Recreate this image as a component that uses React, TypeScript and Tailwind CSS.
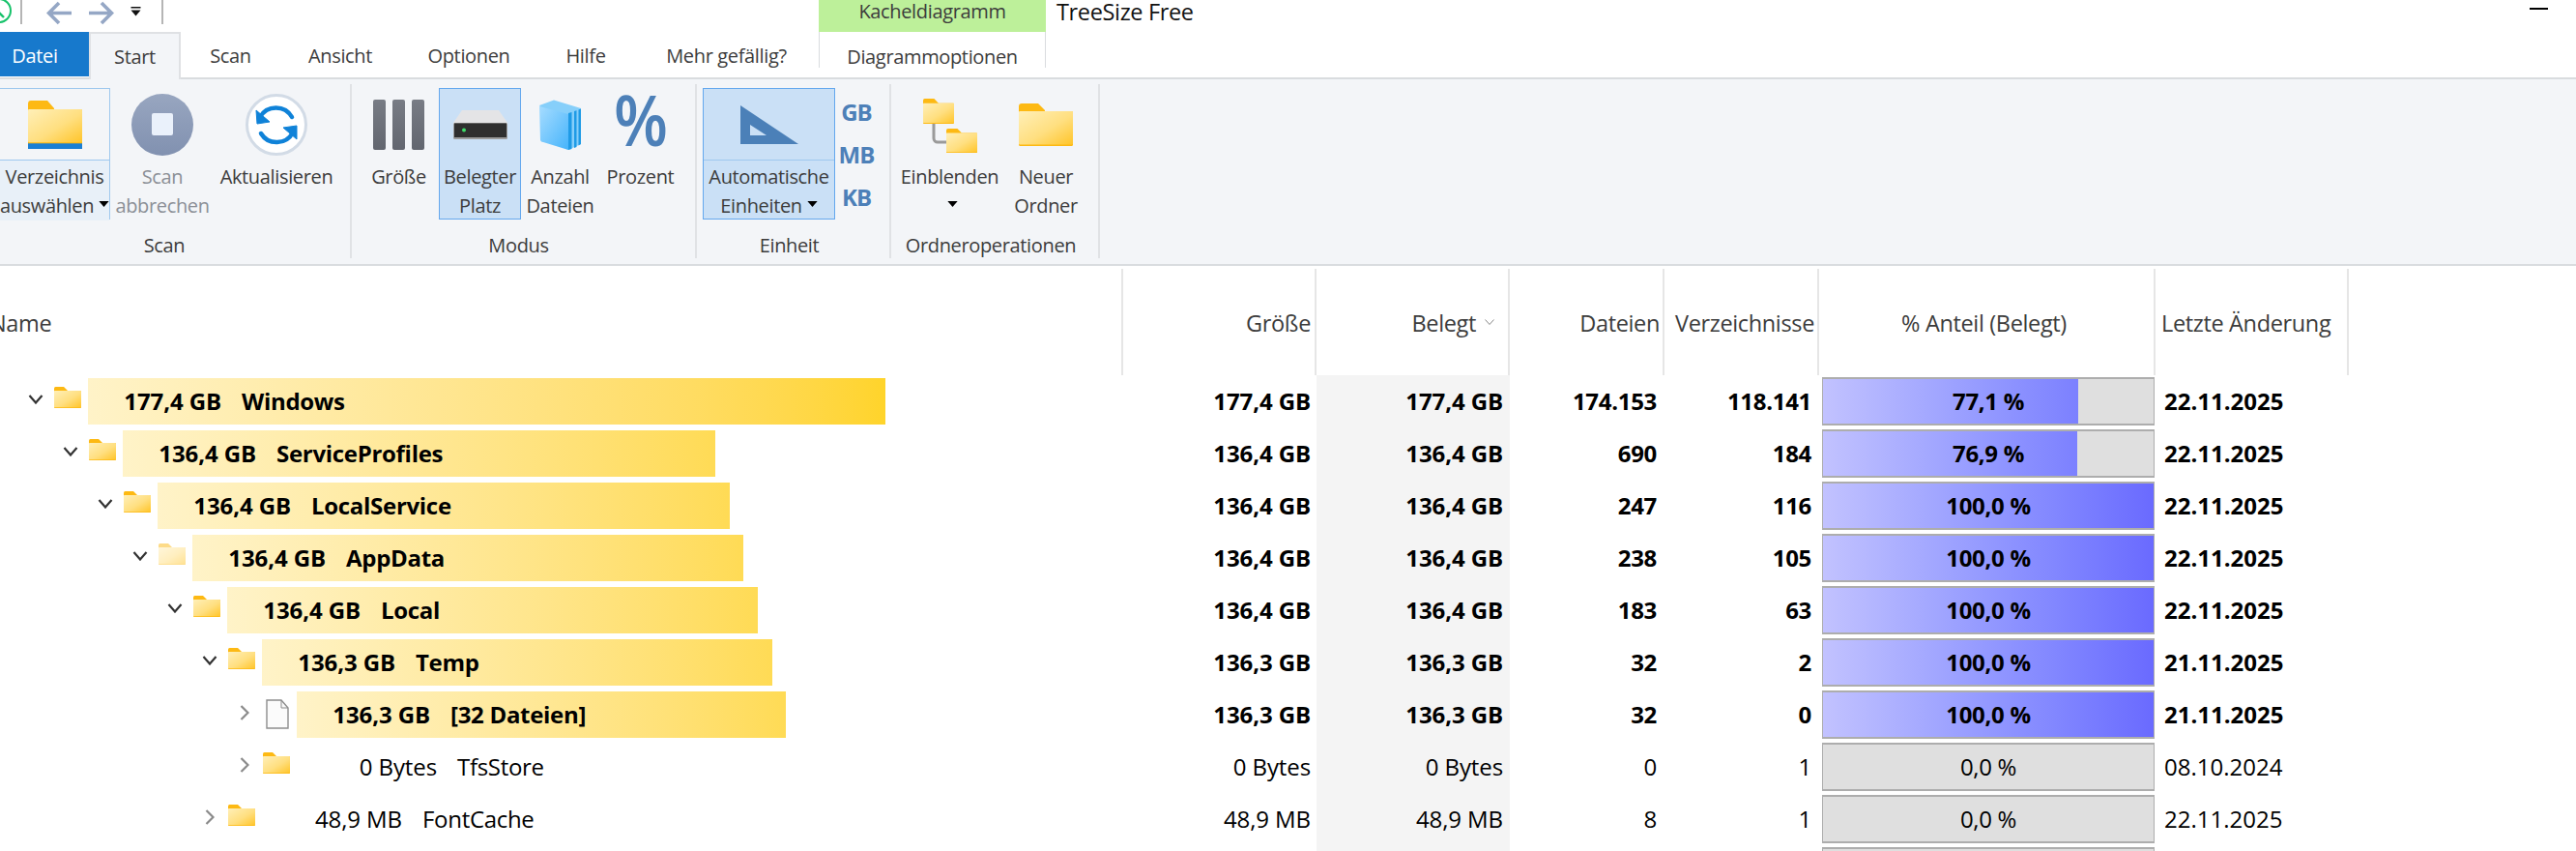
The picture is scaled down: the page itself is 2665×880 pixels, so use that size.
import React from "react";

const Folder = ({ w, h, strip, className = "" }: { w: number; h: number; strip?: boolean; className?: string }) => (
  <svg width={w} height={h} viewBox="0 0 56 44" preserveAspectRatio="none" className={className}>
    <defs>
      <linearGradient id="fg" x1="0" y1="0" x2="1" y2="1">
        <stop offset="0" stopColor="#ffefb8" />
        <stop offset="0.55" stopColor="#ffdf80" />
        <stop offset="1" stopColor="#ffc52a" />
      </linearGradient>
    </defs>
    <path d="M0 3a3 3 0 0 1 3-3h17l7 7v6H0z" fill="#fdb913" />
    <rect x="0" y="8" width="56" height="36" rx="1.5" fill="#fdb913" />
    <rect x="0" y="8" width="56" height={strip ? 30 : 34.5} rx="1" fill="url(#fg)" />
    {strip && <rect x="0" y="39" width="56" height="5" fill="#1a7fd4" />}
  </svg>
);

const Chevron = ({ open }: { open: boolean }) =>
  open ? (
    <svg width="16" height="10" viewBox="0 0 16 10" fill="none" stroke="#333" strokeWidth="2.2">
      <path d="M1.5 1 8 8.5 14.5 1" />
    </svg>
  ) : (
    <svg width="10" height="16" viewBox="0 0 10 16" fill="none" stroke="#8a8a8a" strokeWidth="2.2">
      <path d="M1.5 1 8.5 8 1.5 15" />
    </svg>
  );

const Caret = () => (
  <svg width="11" height="6" viewBox="0 0 12 7" className="inline-block align-[6px] ml-[5px]">
    <path d="M0 0h12L6 7z" fill="#000" />
  </svg>
);

const Btn = ({
  w,
  icon,
  l1,
  l2,
  active,
  split,
  dim,
  className = "",
}: {
  w: string;
  icon: React.ReactNode;
  l1: string;
  l2?: React.ReactNode;
  active?: boolean;
  split?: boolean;
  dim?: boolean;
  className?: string;
}) => (
  <div
    className={`${w} ${className} h-[136px] flex flex-col shrink-0 border ${
      active ? "bg-[#cae0f6] border-[#64a8ee]" : split ? "border-[#9fc8ee]" : "border-transparent"
    } `}
  >
    <div className={`h-[74px] flex items-center justify-center shrink-0 ${split ? "border-b border-[#9fc8ee]" : ""}`}>{icon}</div>
    <div
      className={`grow flex flex-col items-center pt-[2px] leading-[30px] whitespace-nowrap ${dim ? "text-[#8b8f96]" : "text-[#3c3c3c]"} ${
        split && !active ? "bg-[#e8f0f8]" : ""
      }`}
    >
      <span>{l1}</span>
      {l2 && <span>{l2}</span>}
    </div>
  </div>
);

const Group = ({
  w,
  label,
  labelPad,
  children,
  pad,
}: {
  w: string;
  label: string;
  labelPad: string;
  pad?: string;
  children: React.ReactNode;
}) => (
  <div className={`${w} h-[180px] shrink-0 mt-[5px] border-r-2 border-[#e0e2e5] flex flex-col`}>
    <div className={`flex h-[136px] mt-[4px] shrink-0 ${pad ?? ""}`}>{children}</div>
    <div className={`${labelPad} pt-[12px] text-center leading-[30px] text-[#3c3c3c]`}>{label}</div>
  </div>
);

type Row = {
  lv: number;
  open: boolean;
  kind?: "file" | "faded";
  bar?: number;
  grad?: string;
  size: string;
  name: string;
  files: string;
  dirs: string;
  pct: number;
  pctT: string;
  date: string;
  bold: boolean;
};

const G1 = "bg-gradient-to-r from-[#fff3c8] to-[#ffd42a]";
const G2 = "bg-gradient-to-r from-[#fff3c8] to-[#ffdb55]";

const rows: Row[] = [
  { lv: 0, open: true, bar: 825, grad: G1, size: "177,4 GB", name: "Windows", files: "174.153", dirs: "118.141", pct: 77.1, pctT: "77,1 %", date: "22.11.2025", bold: true },
  { lv: 1, open: true, bar: 613, grad: G2, size: "136,4 GB", name: "ServiceProfiles", files: "690", dirs: "184", pct: 76.9, pctT: "76,9 %", date: "22.11.2025", bold: true },
  { lv: 2, open: true, bar: 592, grad: G2, size: "136,4 GB", name: "LocalService", files: "247", dirs: "116", pct: 100, pctT: "100,0 %", date: "22.11.2025", bold: true },
  { lv: 3, open: true, kind: "faded", bar: 570, grad: G2, size: "136,4 GB", name: "AppData", files: "238", dirs: "105", pct: 100, pctT: "100,0 %", date: "22.11.2025", bold: true },
  { lv: 4, open: true, bar: 549, grad: G2, size: "136,4 GB", name: "Local", files: "183", dirs: "63", pct: 100, pctT: "100,0 %", date: "22.11.2025", bold: true },
  { lv: 5, open: true, bar: 528, grad: G2, size: "136,3 GB", name: "Temp", files: "32", dirs: "2", pct: 100, pctT: "100,0 %", date: "21.11.2025", bold: true },
  { lv: 6, open: false, kind: "file", bar: 506, grad: G2, size: "136,3 GB", name: "[32 Dateien]", files: "32", dirs: "0", pct: 100, pctT: "100,0 %", date: "21.11.2025", bold: true },
  { lv: 6, open: false, size: "0 Bytes", name: "TfsStore", files: "0", dirs: "1", pct: 0, pctT: "0,0 %", date: "08.10.2024", bold: false },
  { lv: 5, open: false, size: "48,9 MB", name: "FontCache", files: "8", dirs: "1", pct: 0, pctT: "0,0 %", date: "22.11.2025", bold: false },
];

const FileIcon = () => (
  <svg width="24" height="31" viewBox="0 0 24 31" fill="#fbfbfb" stroke="#8d8d8d" strokeWidth="1.4">
    <path d="M1 1h15l7 8v21H1z" />
    <path d="M16 1v8h7" fill="none" strokeWidth="1" />
  </svg>
);

const TableRow = ({ r }: { r: Row }) => (
  <div className={`flex h-[54px] shrink-0 text-[24px] tracking-[-0.3px] ${r.bold ? "font-bold" : "text-[23.5px]"} text-[#000]`}>
    <div className="w-[1161px] shrink-0 flex items-center overflow-hidden" style={{ paddingLeft: 29 + r.lv * 36 }}>
      <div className="w-[27px] shrink-0 flex items-center justify-start -mt-[4px]">
        <span className="w-[16px] flex justify-center">
          <Chevron open={r.open} />
        </span>
      </div>
      <div className="w-[35px] shrink-0 -mt-[8px]">
        {r.kind === "file" ? (
          <span className="block ml-[3px] mt-[6px]">
            <FileIcon />
          </span>
        ) : (
          <Folder w={28} h={22} className={r.kind === "faded" ? "opacity-50" : ""} />
        )}
      </div>
      <div className={`h-[48px] flex items-center shrink-0 ${r.grad ?? ""}`} style={{ width: r.bar ?? 600 }}>
        <span className={`${r.bold ? "w-[138px]" : "w-[145px]"} text-right whitespace-nowrap tracking-[-0.1px]`}>{r.size}</span>
        <span className="ml-[21px] whitespace-nowrap">{r.name}</span>
      </div>
    </div>
    <div className="w-[201px] shrink-0 flex items-center justify-end pr-[6px] tracking-[-0.1px]">{r.size}</div>
    <div className="w-[200px] shrink-0 flex items-center justify-end pr-[7px] tracking-[-0.1px] bg-[#f4f4f4]">{r.size}</div>
    <div className="w-[160px] shrink-0 flex items-center justify-end pr-[8px]">{r.files}</div>
    <div className="w-[160px] shrink-0 flex items-center justify-end pr-[8px]">{r.dirs}</div>
    <div className="w-[348px] shrink-0 flex items-center pl-[3px] pr-[1px]">
      <div className="relative w-full h-[50px] border-x border-y-2 border-[#adadad] flex bg-gradient-to-r from-[#c2c2ff] to-[#6a6aff]">
        <div className="shrink-0" style={{ width: `${r.pct}%` }} />
        <div className="grow bg-[#dfdfdf]" />
        <span className="absolute inset-0 flex items-center justify-center">{r.pctT}</span>
      </div>
    </div>
    <div className="grow flex items-center pl-[9px] tracking-[0px]">{r.date}</div>
  </div>
);

const Tab = ({ w, children }: { w: string; children: React.ReactNode }) => (
  <div className={`${w} shrink-0 flex items-center justify-center text-[#3c3c3c] pt-[3px]`}>{children}</div>
);

const HeadCell = ({ w, children, cls = "" }: { w: string; children: React.ReactNode; cls?: string }) => (
  <div className={`${w} shrink-0 h-[110px] border-r-2 border-[#e6e6e6] flex items-center pt-[3px] ${cls}`}>{children}</div>
);

export default function App() {
  return (
    <div className="w-[2665px] h-[880px] overflow-hidden bg-white font-['Open_Sans','Liberation_Sans',sans-serif] text-[20px] tracking-[-0.35px]">
      {/* title bar */}
      <div className="h-[33px] flex">
        <svg width="12" height="26" viewBox="0 0 12 26" fill="none" stroke="#16c26a" strokeWidth="2" className="shrink-0">
          <circle cx="-1" cy="11" r="12" />
          <path d="M-1 13 L4 18" strokeWidth="2.4" />
        </svg>
        <div className="ml-[9px] w-[2px] h-[25px] bg-[#b5b5b5]" />
        <svg width="28" height="25" viewBox="0 0 28 25" fill="none" stroke="#95a7c5" strokeWidth="3.6" className="ml-[25px] mt-[1px]">
          <path d="M26 12.5H3M13 2 2.5 12.5 13 23" />
        </svg>
        <svg width="28" height="25" viewBox="0 0 28 25" fill="none" stroke="#95a7c5" strokeWidth="3.6" className="ml-[14px] mt-[1px]">
          <path d="M2 12.5h23M15 2l10.5 10.5L15 23" />
        </svg>
        <svg width="11" height="10" viewBox="0 0 10 10" className="ml-[17px] mt-[7px]">
          <path d="M0 0h10v1.4H0zM0 3.5h10L5 9.5z" fill="#111" />
        </svg>
        <div className="ml-[21px] w-[2px] h-[25px] bg-[#b5b5b5]" />
        <div className="ml-[678px] w-[235px] h-[33px] bg-[#bdf09a] text-center leading-[24px] text-[#3c3c3c]">Kacheldiagramm</div>
        <div className="ml-[11px] leading-[24px] text-[#111] text-[23.5px]">TreeSize Free</div>
        <div className="ml-auto mr-[29px] mt-[8px] w-[19px] h-[2px] bg-black" />
      </div>

      {/* tabs */}
      <div className="h-[49px] flex border-b-2 border-[#d9dcdf]">
        <div className="w-[92px] h-[46px] bg-[#1779cc] text-white flex items-center justify-center shrink-0 pt-[3px] pr-[20px]">Datei</div>
        <div className="w-[95px] h-[49px] bg-[#f3f5f8] border-x-2 border-t-2 border-[#dfe1e4] flex items-center justify-center shrink-0 text-[#3c3c3c]">
          Start
        </div>
        <Tab w="w-[103px]">Scan</Tab>
        <Tab w="w-[124px]">Ansicht</Tab>
        <Tab w="w-[142px]">Optionen</Tab>
        <Tab w="w-[100px]">Hilfe</Tab>
        <Tab w="w-[191px]">Mehr gefällig?</Tab>
        <div className="w-[235px] h-[37px] shrink-0 border-x border-[#d9dcdf] flex items-center justify-center text-[#3c3c3c] pt-[14px]">
          Diagrammoptionen
        </div>
      </div>

      {/* ribbon */}
      <div className="h-[193px] bg-[#f3f5f8] border-b-2 border-[#d9dcdf] flex">
        <Group w="w-[364px]" label="Scan" labelPad="pr-[22px]">
          <Btn
            w="w-[115px]"
            className="-ml-[1px]"
            split
            icon={<Folder w={56} h={50} strip />}
            l1="Verzeichnis"
            l2={
              <>
                auswählen
                <Caret />
              </>
            }
          />
          <Btn
            w="w-[108px]"
            dim
            icon={
              <svg width="64" height="64" viewBox="0 0 64 64">
                <defs>
                  <linearGradient id="st" x1="0" y1="0" x2="0" y2="1">
                    <stop offset="0" stopColor="#98a6c0" />
                    <stop offset="1" stopColor="#8191b0" />
                  </linearGradient>
                </defs>
                <circle cx="32" cy="32" r="32" fill="url(#st)" />
                <rect x="21" y="20" width="22" height="23" rx="2" fill="#eaf1fb" />
              </svg>
            }
            l1="Scan"
            l2="abbrechen"
          />
          <Btn
            w="w-[128px]"
            icon={
              <svg width="64" height="64" viewBox="0 0 64 64" fill="none">
                <circle cx="32" cy="32" r="30.5" fill="#fff" stroke="#d2dbe6" strokeWidth="3" />
                <path d="M15 24A19 19 0 0 1 48 24" stroke="#0f82d8" strokeWidth="4.5" strokeLinecap="round" />
                <path d="M16 41A19 19 0 0 0 49 40" stroke="#0f82d8" strokeWidth="4.5" strokeLinecap="round" />
                <path d="M11 17 12 31 25 29z" fill="#0f82d8" stroke="#0f82d8" strokeLinejoin="round" />
                <path d="M53 33V47L39 35z" fill="#0f82d8" stroke="#0f82d8" strokeLinejoin="round" />
              </svg>
            }
            l1="Aktualisieren"
          />
        </Group>

        <Group w="w-[357px]" label="Modus" labelPad="pr-[10px]" pad="pl-[7px]">
          <Btn
            w="w-[83px]"
            icon={
              <span className="flex gap-[7px]">
                <span className="w-[13px] h-[52px] rounded-[2px] bg-gradient-to-b from-[#787c85] to-[#62666f]" />
                <span className="w-[13px] h-[52px] rounded-[2px] bg-gradient-to-b from-[#787c85] to-[#62666f]" />
                <span className="w-[13px] h-[52px] rounded-[2px] bg-gradient-to-b from-[#787c85] to-[#62666f]" />
              </span>
            }
            l1="Größe"
          />
          <Btn
            w="w-[85px]"
            active
            icon={
              <svg width="56" height="30" viewBox="0 0 56 30">
                <path d="M9 0h38l9 13v4H0v-4z" fill="#e4e4e6" />
                <rect x="0" y="13" width="56" height="17" rx="1.5" fill="#9b9b9b" />
                <rect x="1" y="13.5" width="54" height="14.5" fill="#2f2f2f" />
                <circle cx="11" cy="20.5" r="2" fill="#3ddc6a" />
              </svg>
            }
            l1="Belegter"
            l2="Platz"
          />
          <Btn
            w="w-[81px]"
            icon={
              <svg width="43" height="52" viewBox="0 0 43 52">
                <defs>
                  <linearGradient id="fb" x1="0" y1="0" x2="1" y2="1">
                    <stop offset="0" stopColor="#a6dcff" />
                    <stop offset="1" stopColor="#46b4fb" />
                  </linearGradient>
                </defs>
                <path d="M0 6 15 .5 43 9V46L30 52 28 51z" fill="#86cffa" />
                <path d="M30 14 33.5 13V51L30 52z" fill="#1f9be6" />
                <path d="M36 12 38.5 11.2V49L36 50z" fill="#1f9be6" />
                <path d="M40.5 10.5 43 9.5V46L40.5 47.5z" fill="#1f9be6" />
                <path d="M0 7 30 15V52L4 44a3 3 0 0 1-3-2z" fill="url(#fb)" />
              </svg>
            }
            l1="Anzahl"
            l2="Dateien"
          />
          <Btn
            w="w-[79px]"
            className="ml-[3px]"
            icon={<span className="text-[#4d80b8] font-semibold text-[72px] leading-none -translate-y-[6px] scale-x-[0.9]">%</span>}
            l1="Prozent"
          />
        </Group>

        <Group w="w-[201px]" label="Einheit" labelPad="pr-[8px]" pad="pl-[6px]">
          <Btn
            w="w-[137px]"
            active
            split
            icon={
              <svg width="60" height="40" viewBox="0 0 60 40">
                <path fillRule="evenodd" d="M0 0 60 40H0zM10 20v11h17z" fill="#4b80b8" />
              </svg>
            }
            l1="Automatische"
            l2={
              <>
                Einheiten
                <Caret />
              </>
            }
          />
          <div className="w-[44px] h-[136px] flex flex-col items-center text-[#4d80b8] font-bold text-[24px] leading-[32px] pt-[9px] gap-[12px] tracking-[-1px]">
            <span>GB</span>
            <span>MB</span>
            <span>KB</span>
          </div>
        </Group>

        <Group w="w-[216px]" label="Ordneroperationen" labelPad="pr-[8px]">
          <Btn
            w="w-[121px]"
            icon={
              <svg width="56" height="56" viewBox="0 0 56 56" fill="none" className="mt-[1px]">
                <path d="M11 26v15a4 4 0 0 0 4 4h10" stroke="#9a9a9a" strokeWidth="3" />
                <foreignObject x="0" y="0" width="32" height="26">
                  <Folder w={32} h={26} />
                </foreignObject>
                <foreignObject x="24" y="31" width="32" height="25">
                  <Folder w={32} h={25} />
                </foreignObject>
              </svg>
            }
            l1="Einblenden"
            l2={<Caret />}
          />
          <Btn w="w-[78px]" icon={<Folder w={56} h={44} />} l1="Neuer" l2="Ordner" />
        </Group>
      </div>

      {/* header */}
      <div className="h-[113px] pt-[3px] flex text-[#3c3c3c] text-[23.5px]">
        <div className="w-[1173px] shrink-0 h-[110px] border-r-2 border-[#e6e6e6] flex items-center pt-[3px] -ml-[11px]">Name</div>
        <HeadCell w="w-[200px]" cls="justify-end pr-[4px]">Größe</HeadCell>
        <HeadCell w="w-[200px]" cls="justify-end pr-[14px]">
          Belegt
          <svg width="10" height="6" viewBox="0 0 10 6" fill="none" stroke="#888" className="ml-[9px] -mt-[4px]">
            <path d="M.5.5 5 5.5 9.5.5" />
          </svg>
        </HeadCell>
        <HeadCell w="w-[160px]" cls="justify-end pr-[3px]">Dateien</HeadCell>
        <HeadCell w="w-[160px]" cls="justify-end pr-[3px]">Verzeichnisse</HeadCell>
        <HeadCell w="w-[348px]" cls="justify-center pr-[5px]">% Anteil (Belegt)</HeadCell>
        <HeadCell w="w-[200px]" cls="pl-[6px]">Letzte Änderung</HeadCell>
      </div>

      {/* rows */}
      <div className="flex flex-col">
        {rows.map((r, i) => (
          <TableRow key={i} r={r} />
        ))}
        <div className="flex h-[54px] shrink-0">
          <div className="w-[1362px] shrink-0" />
          <div className="w-[200px] shrink-0 bg-[#f4f4f4]" />
          <div className="w-[320px] shrink-0" />
          <div className="w-[348px] shrink-0 flex items-center pl-[3px] pr-[1px]">
            <div className="w-full h-[50px] border-x border-y-2 border-[#adadad] bg-[#dfdfdf]" />
          </div>
        </div>
      </div>
    </div>
  );
}
